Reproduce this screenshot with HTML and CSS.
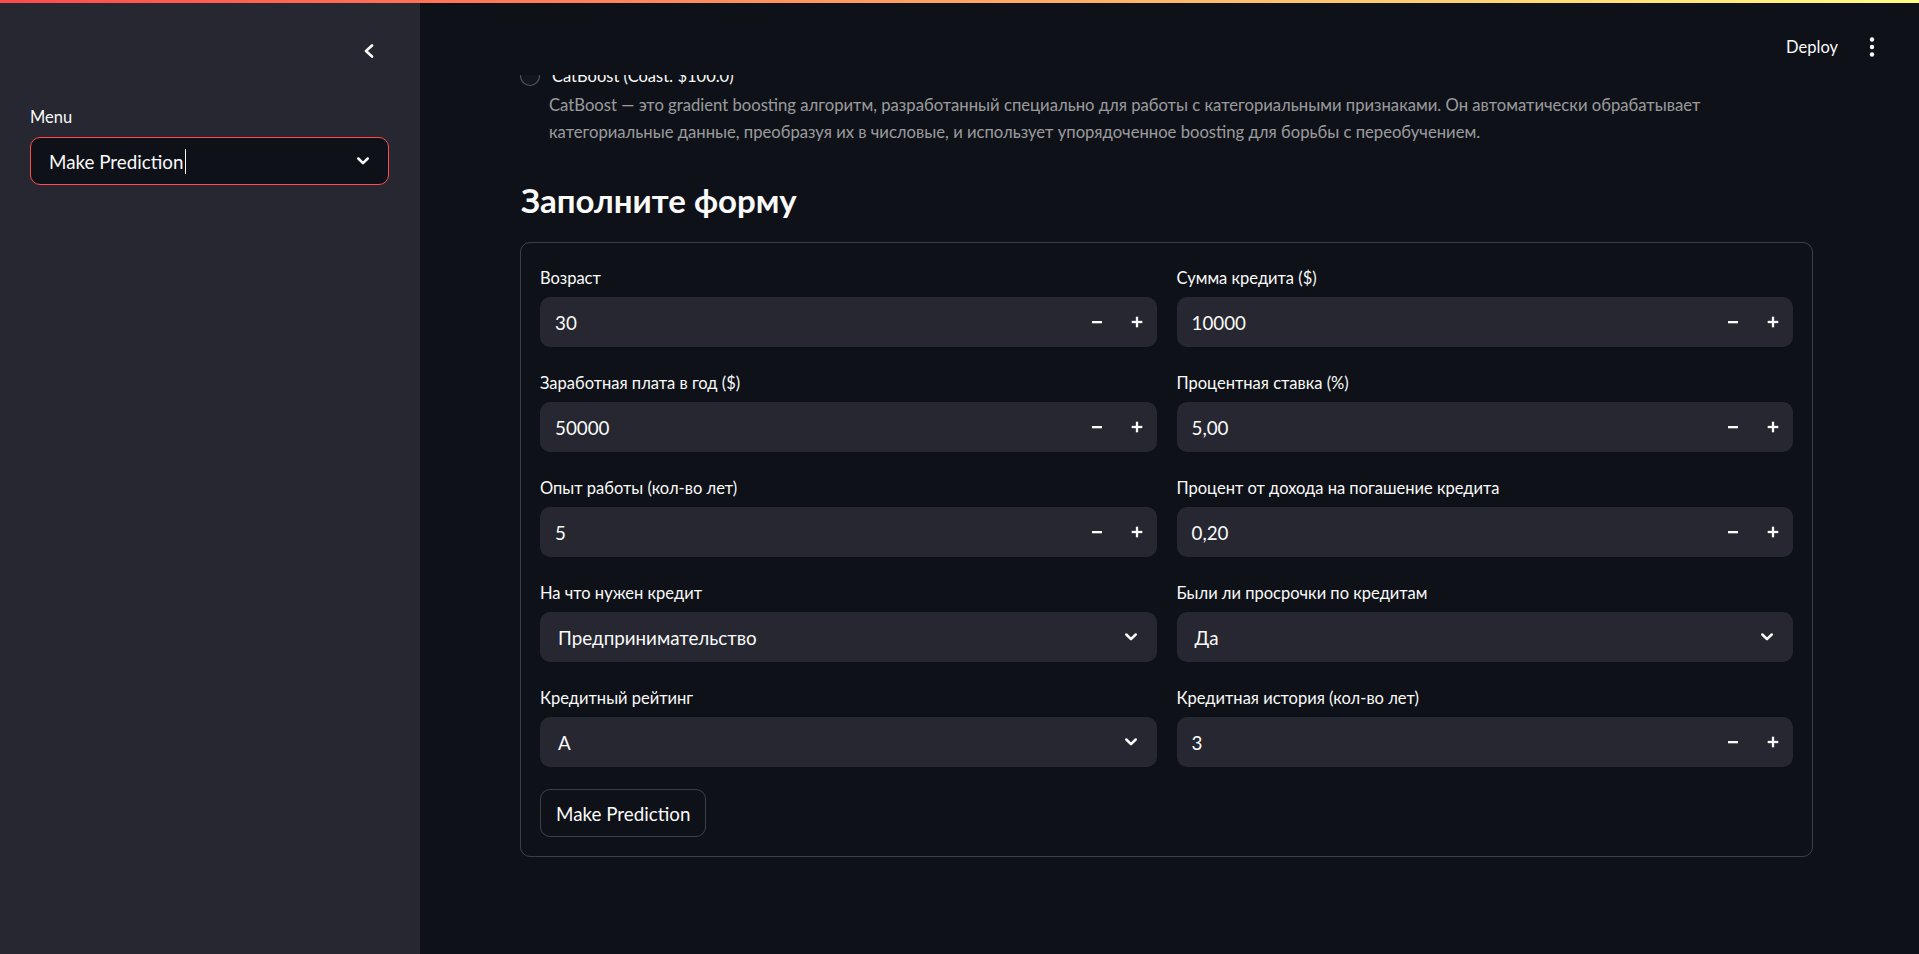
FILE: index.html
```html
<!DOCTYPE html>
<html lang="ru">
<head>
<meta charset="utf-8">
<title>Make Prediction</title>
<link rel="stylesheet" href="styles.css">
</head>
<body>
<div class="app">
  <div class="decoration"></div>

  <aside class="sidebar">
    <div class="sidebar-head">
      <button class="collapse-btn" aria-label="Collapse sidebar">
        <svg width="10" height="14" viewBox="0 0 10 14"><polyline points="8,1.5 2,7 8,12.5" fill="none" stroke="#fafafa" stroke-width="2.6" stroke-linecap="round" stroke-linejoin="round"/></svg>
      </button>
    </div>
    <div class="sidebar-widget">
      <div class="field-label sidebar-label">Menu</div>
      <div class="sidebar-select">
        <span class="sidebar-select-value">Make Prediction<span class="caret"></span></span>
        <svg class="chev" width="12" height="8" viewBox="0 0 12 8"><polyline points="1.3,1.5 6,6.2 10.7,1.5" fill="none" stroke="#fafafa" stroke-width="2.5" stroke-linecap="round" stroke-linejoin="round"/></svg>
      </div>
    </div>
  </aside>

  <main class="main">
    <header class="header">
      <span class="deploy">Deploy</span>
      <span class="kebab" aria-label="Main menu">
        <svg width="6" height="20" viewBox="0 0 6 20"><circle cx="3" cy="2.5" r="2.2" fill="#fafafa"/><circle cx="3" cy="10" r="2.2" fill="#fafafa"/><circle cx="3" cy="17.5" r="2.2" fill="#fafafa"/></svg>
      </span>
    </header>

    <div class="content">
      <div class="radio-row">
        <span class="radio-circle"></span>
        <span class="radio-label">CatBoost (Coast: $100.0)</span>
      </div>
      <p class="radio-caption">CatBoost — это gradient boosting алгоритм, разработанный специально для работы с категориальными признаками. Он автоматически обрабатывает<br>категориальные данные, преобразуя их в числовые, и использует упорядоченное boosting для борьбы с переобучением.</p>

      <h3 class="subheader">Заполните форму</h3>

      <form class="form-card">
        <div class="form-grid">
          <div class="field">
            <div class="field-label">Возраст</div>
            <div class="num">
              <span class="num-value">30</span>
              <span class="step"><svg width="12" height="12" viewBox="0 0 12 12"><rect x="1" y="5" width="10" height="2.3" fill="#fafafa"/></svg></span>
              <span class="step"><svg width="12" height="12" viewBox="0 0 12 12"><rect x="0.7" y="4.85" width="10.6" height="2.3" fill="#fafafa"/><rect x="4.85" y="0.7" width="2.3" height="10.6" fill="#fafafa"/></svg></span>
            </div>
          </div>
          <div class="field">
            <div class="field-label">Сумма кредита ($)</div>
            <div class="num">
              <span class="num-value">10000</span>
              <span class="step"><svg width="12" height="12" viewBox="0 0 12 12"><rect x="1" y="5" width="10" height="2.3" fill="#fafafa"/></svg></span>
              <span class="step"><svg width="12" height="12" viewBox="0 0 12 12"><rect x="0.7" y="4.85" width="10.6" height="2.3" fill="#fafafa"/><rect x="4.85" y="0.7" width="2.3" height="10.6" fill="#fafafa"/></svg></span>
            </div>
          </div>

          <div class="field">
            <div class="field-label">Заработная плата в год ($)</div>
            <div class="num">
              <span class="num-value">50000</span>
              <span class="step"><svg width="12" height="12" viewBox="0 0 12 12"><rect x="1" y="5" width="10" height="2.3" fill="#fafafa"/></svg></span>
              <span class="step"><svg width="12" height="12" viewBox="0 0 12 12"><rect x="0.7" y="4.85" width="10.6" height="2.3" fill="#fafafa"/><rect x="4.85" y="0.7" width="2.3" height="10.6" fill="#fafafa"/></svg></span>
            </div>
          </div>
          <div class="field">
            <div class="field-label">Процентная ставка (%)</div>
            <div class="num">
              <span class="num-value">5,00</span>
              <span class="step"><svg width="12" height="12" viewBox="0 0 12 12"><rect x="1" y="5" width="10" height="2.3" fill="#fafafa"/></svg></span>
              <span class="step"><svg width="12" height="12" viewBox="0 0 12 12"><rect x="0.7" y="4.85" width="10.6" height="2.3" fill="#fafafa"/><rect x="4.85" y="0.7" width="2.3" height="10.6" fill="#fafafa"/></svg></span>
            </div>
          </div>

          <div class="field">
            <div class="field-label">Опыт работы (кол-во лет)</div>
            <div class="num">
              <span class="num-value">5</span>
              <span class="step"><svg width="12" height="12" viewBox="0 0 12 12"><rect x="1" y="5" width="10" height="2.3" fill="#fafafa"/></svg></span>
              <span class="step"><svg width="12" height="12" viewBox="0 0 12 12"><rect x="0.7" y="4.85" width="10.6" height="2.3" fill="#fafafa"/><rect x="4.85" y="0.7" width="2.3" height="10.6" fill="#fafafa"/></svg></span>
            </div>
          </div>
          <div class="field">
            <div class="field-label">Процент от дохода на погашение кредита</div>
            <div class="num">
              <span class="num-value">0,20</span>
              <span class="step"><svg width="12" height="12" viewBox="0 0 12 12"><rect x="1" y="5" width="10" height="2.3" fill="#fafafa"/></svg></span>
              <span class="step"><svg width="12" height="12" viewBox="0 0 12 12"><rect x="0.7" y="4.85" width="10.6" height="2.3" fill="#fafafa"/><rect x="4.85" y="0.7" width="2.3" height="10.6" fill="#fafafa"/></svg></span>
            </div>
          </div>

          <div class="field">
            <div class="field-label">На что нужен кредит</div>
            <div class="select">
              <span class="select-value">Предпринимательство</span>
              <svg class="chev" width="12" height="8" viewBox="0 0 12 8"><polyline points="1.3,1.5 6,6.2 10.7,1.5" fill="none" stroke="#fafafa" stroke-width="2.5" stroke-linecap="round" stroke-linejoin="round"/></svg>
            </div>
          </div>
          <div class="field">
            <div class="field-label">Были ли просрочки по кредитам</div>
            <div class="select">
              <span class="select-value">Да</span>
              <svg class="chev" width="12" height="8" viewBox="0 0 12 8"><polyline points="1.3,1.5 6,6.2 10.7,1.5" fill="none" stroke="#fafafa" stroke-width="2.5" stroke-linecap="round" stroke-linejoin="round"/></svg>
            </div>
          </div>

          <div class="field">
            <div class="field-label">Кредитный рейтинг</div>
            <div class="select">
              <span class="select-value">A</span>
              <svg class="chev" width="12" height="8" viewBox="0 0 12 8"><polyline points="1.3,1.5 6,6.2 10.7,1.5" fill="none" stroke="#fafafa" stroke-width="2.5" stroke-linecap="round" stroke-linejoin="round"/></svg>
            </div>
          </div>
          <div class="field">
            <div class="field-label">Кредитная история (кол-во лет)</div>
            <div class="num">
              <span class="num-value">3</span>
              <span class="step"><svg width="12" height="12" viewBox="0 0 12 12"><rect x="1" y="5" width="10" height="2.3" fill="#fafafa"/></svg></span>
              <span class="step"><svg width="12" height="12" viewBox="0 0 12 12"><rect x="0.7" y="4.85" width="10.6" height="2.3" fill="#fafafa"/><rect x="4.85" y="0.7" width="2.3" height="10.6" fill="#fafafa"/></svg></span>
            </div>
          </div>
        </div>
        <button type="button" class="submit-btn">Make Prediction</button>
      </form>
    </div>
  </main>
</div>
</body>
</html>
```
FILE: styles.css
```css
html, body {
  margin: 0;
  padding: 0;
  height: 954px;
  overflow: hidden;
  background: #0e1117;
}

body {
  font-family: "Lato", "Roboto", "Liberation Sans", sans-serif;
  color: #fafafa;
  -webkit-font-smoothing: antialiased;
}

.app {
  position: relative;
  display: flex;
  height: 954px;
}

.decoration {
  position: absolute;
  top: 0;
  left: 0;
  right: 0;
  height: 3px;
  background: linear-gradient(90deg, #ff4b4b, #fffd80);
  z-index: 10;
}

/* ---------- Sidebar ---------- */
.sidebar {
  width: 420px;
  flex: 0 0 420px;
  background: #262730;
  box-sizing: border-box;
}

.sidebar-head {
  height: 102px;
  display: flex;
  align-items: center;
  justify-content: flex-end;
  padding-right: 46px;
}

.collapse-btn {
  background: none;
  border: 0;
  padding: 0;
  display: flex;
  align-items: center;
  cursor: pointer;
}

.sidebar-widget {
  padding: 0 31px 0 30px;
}

.field-label {
  height: 28px;
  line-height: 28px;
  margin-bottom: 5px;
  font-size: 16.5px;
  color: #fafafa;
  white-space: nowrap;
}

.sidebar-label {
  height: 30px;
  line-height: 30px;
}

.sidebar-select {
  height: 48px;
  box-sizing: border-box;
  border: 1px solid #ff4b4b;
  border-radius: 10px;
  background: #0e1117;
  display: flex;
  align-items: center;
  justify-content: space-between;
  padding: 0 19px 0 18px;
}

.sidebar-select-value {
  font-size: 18.8px;
  display: flex;
  align-items: center;
}

.caret {
  display: inline-block;
  width: 1px;
  height: 25px;
  background: #fafafa;
  margin-left: 2px;
}

.chev {
  display: block;
  flex: 0 0 auto;
}

/* ---------- Main ---------- */
.main {
  position: relative;
  flex: 1 1 auto;
  overflow: hidden;
  background: #0e1117;
}

.header {
  position: absolute;
  top: 0;
  left: 0;
  right: 0;
  height: 75px;
  background: #0e1117;
  z-index: 5;
  display: flex;
  justify-content: flex-end;
  align-items: flex-start;
  padding-top: 35px;
  padding-right: 44px;
  box-sizing: border-box;
}

.deploy {
  font-size: 16.5px;
  line-height: 24px;
  color: #fafafa;
}

.kebab {
  display: flex;
  align-items: center;
  height: 24px;
  margin-left: 31px;
}

.content {
  padding: 64px 106px 0 100px;
}

.radio-row {
  display: flex;
  align-items: center;
  height: 24px;
}

.radio-circle {
  width: 20px;
  height: 20px;
  box-sizing: border-box;
  border-radius: 50%;
  border: 1px solid rgba(250, 250, 250, 0.3);
  background: #14161d;
  flex: 0 0 auto;
}

.radio-label {
  margin-left: 12px;
  font-size: 16.5px;
  line-height: 24px;
}

.radio-caption {
  margin: 3.5px 0 0;
  padding-left: 29px;
  font-size: 16.65px;
  line-height: 27px;
  color: rgba(250, 250, 250, 0.6);
  white-space: nowrap;
}

.subheader {
  margin: 34.5px 0 0;
  padding-left: 1px;
  font-size: 33px;
  line-height: 40px;
  font-weight: 700;
  color: #fafafa;
}

.form-card {
  margin: 22px 0 0;
  border: 1px solid rgba(250, 250, 250, 0.2);
  border-radius: 10px;
  padding: 21px 19px 19px;
}

.form-grid {
  display: grid;
  grid-template-columns: 1fr 1fr;
  column-gap: 20px;
  row-gap: 22px;
}

.field {
  min-width: 0;
}

.num,
.select {
  height: 50px;
  border-radius: 10px;
  background: #262730;
  display: flex;
  align-items: center;
}

.num-value {
  flex: 1 1 auto;
  padding-left: 15px;
  font-size: 18.8px;
}

.step {
  width: 40px;
  height: 50px;
  display: flex;
  align-items: center;
  justify-content: center;
}

.select {
  justify-content: space-between;
  padding: 0 20px 0 18px;
}

.select-value {
  font-size: 18.8px;
}

.submit-btn {
  margin-top: 22px;
  height: 48px;
  padding: 0 15px;
  background: transparent;
  border: 1px solid rgba(250, 250, 250, 0.2);
  border-radius: 10px;
  color: #fafafa;
  font-family: inherit;
  font-size: 18.8px;
  cursor: pointer;
}
```
